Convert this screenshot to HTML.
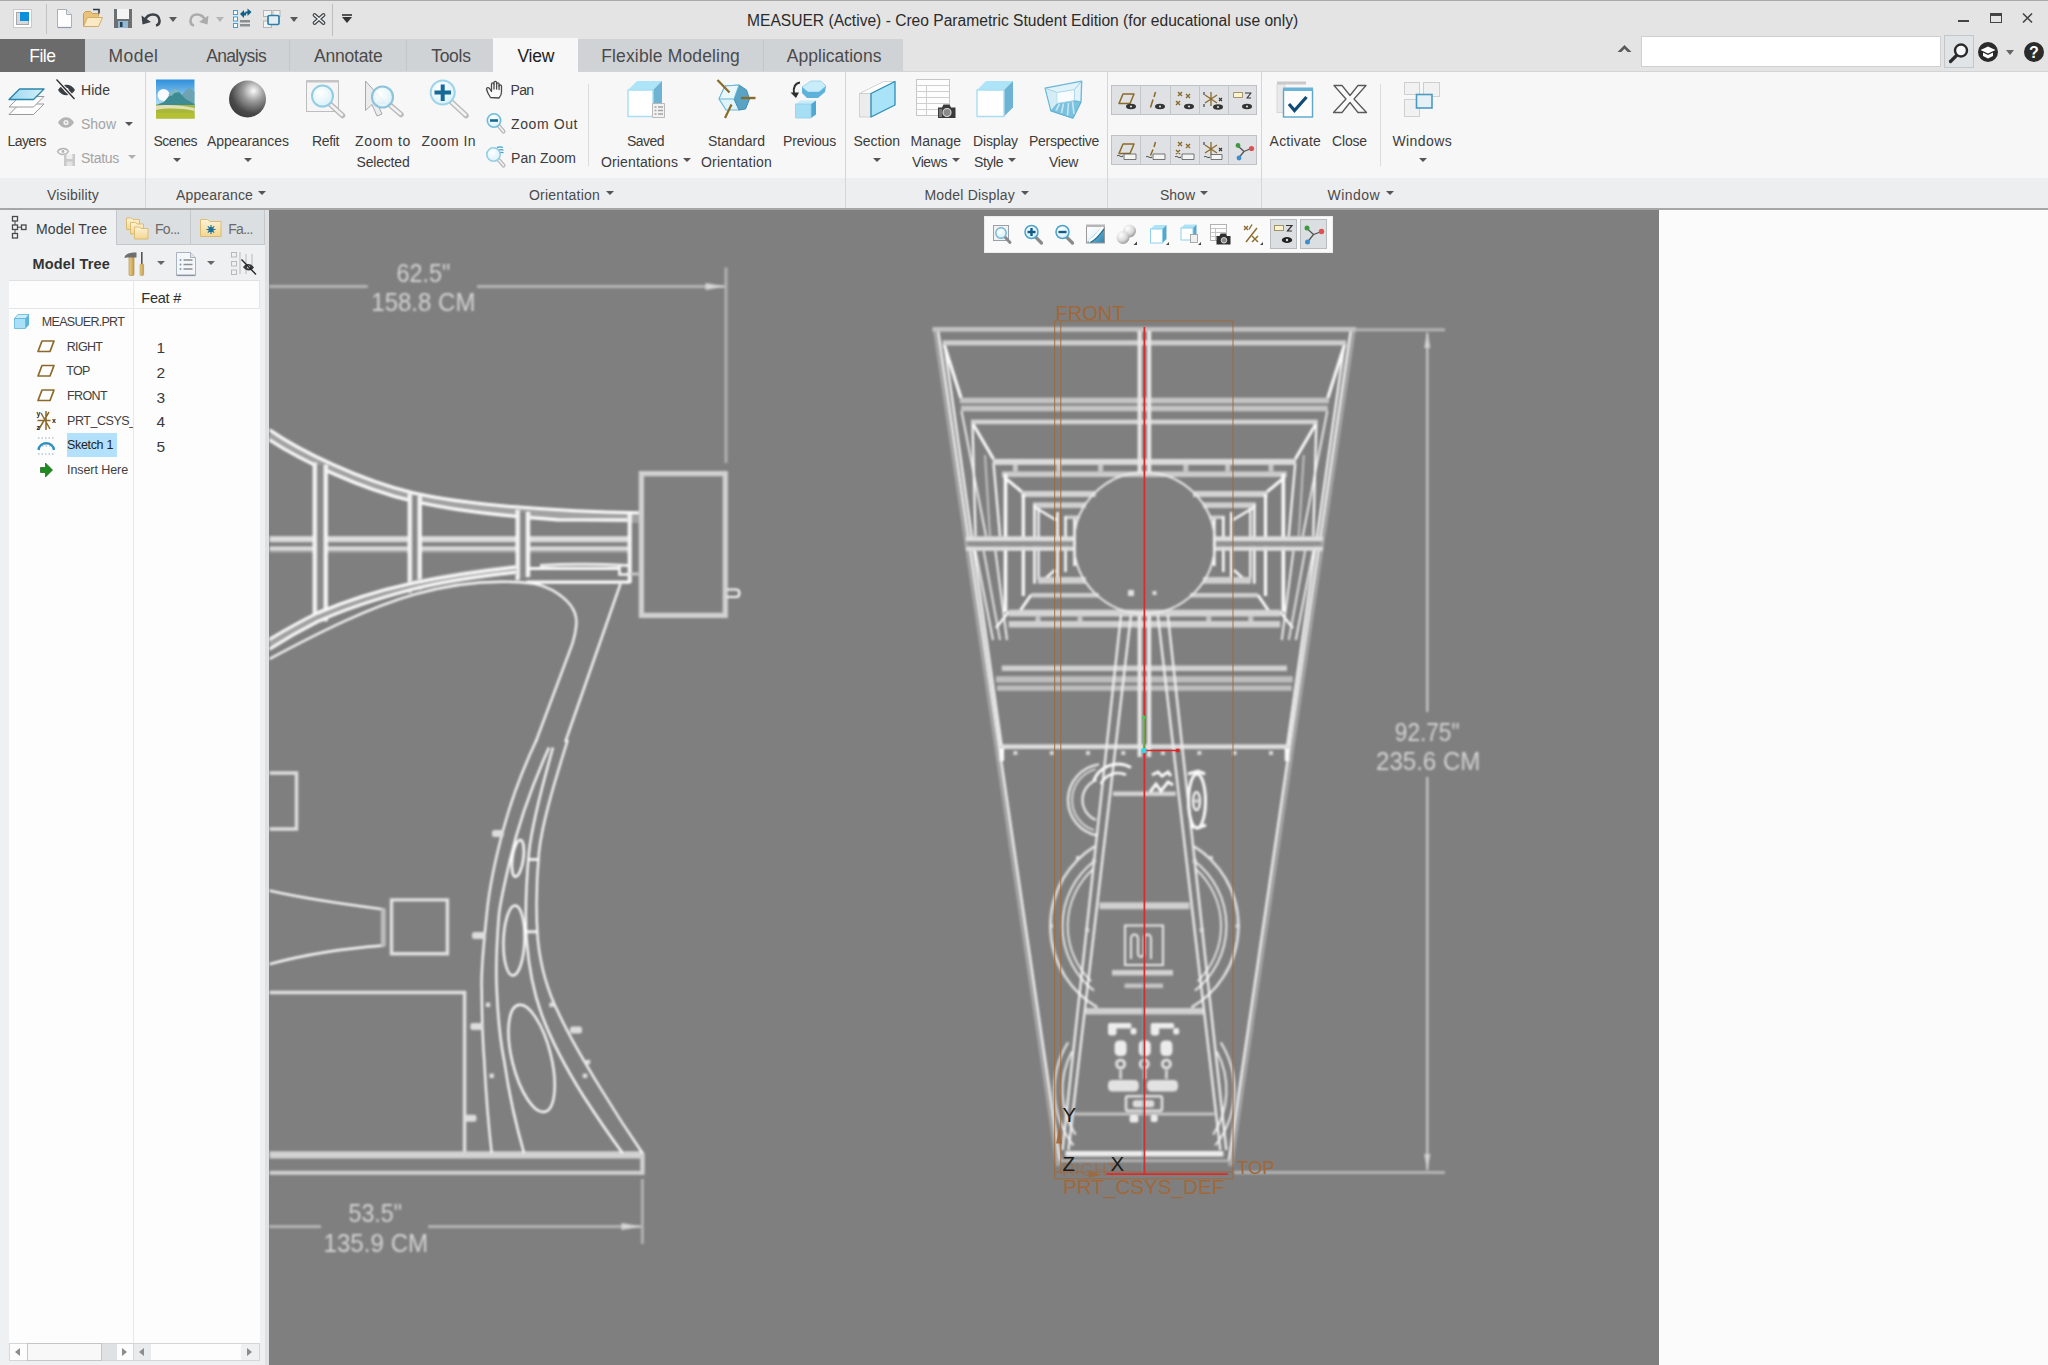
<!DOCTYPE html>
<html lang="en">
<head>
<meta charset="utf-8">
<title>MEASUER (Active) - Creo Parametric Student Edition</title>
<style>
*{box-sizing:border-box;margin:0;padding:0}
html,body{width:2048px;height:1365px;overflow:hidden;background:#fbfbfb;font-family:"Liberation Sans",sans-serif;color:#3c3c3c}
.abs,.abs>*{position:absolute}
#app{position:relative;width:2048px;height:1365px;overflow:hidden}
#titlebar{left:0;top:0;width:2048px;height:72px;background:#e4e4e4;border-top:1px solid #a9a9a9}
#tabbar{left:0;top:39px;width:903px;height:33px;background:#d0d3d6}
.tab{top:39px;height:33px;font-size:17.5px;line-height:33px;text-align:center;color:#4a4a4a;white-space:nowrap}
#ribbon{left:0;top:72px;width:2048px;height:106px;background:#f7f7f7}
#grouprow{left:0;top:178px;width:2048px;height:30px;background:#edeef0}
#ribline{left:0;top:208px;width:2048px;height:2px;background:#a6a6a6}
.gl{top:178px;height:30px;line-height:31px;font-size:14.5px;color:#4a4a4a;white-space:nowrap}
.gsep{top:72px;width:1px;height:136px;background:#d4d6d8}
.rl{font-size:14.5px;color:#3e3e3e;white-space:nowrap;text-align:center;line-height:20px}
.dim{color:#9a9a9a}
.tri{width:0;height:0;border-left:4px solid transparent;border-right:4px solid transparent;border-top:5px solid #555}
#leftpanel{left:0;top:210px;width:269px;height:1155px;background:#eef0f2}
#viewport{left:269px;top:210px;width:1390px;height:1155px;background:#7f7f7f;overflow:hidden}
#rightpanel{left:1659px;top:210px;width:389px;height:1155px;background:#fbfbfb}
svg{position:absolute;overflow:visible}
</style>
</head>
<body>
<div id="app" class="abs">
<div id="titlebar"></div>
<div id="tabbar"></div>
<div id="ribbon"></div>
<div id="grouprow"></div>
<div id="ribline"></div>
<div id="leftpanel"></div>
<div id="viewport"></div>
<div id="rightpanel"></div>
<!--TITLE-->
<!-- ===== TITLE BAR ===== -->
<div class="abs" id="qat">
 <!-- app icon -->
 <div style="left:13px;top:9px;width:19px;height:19px;background:#fff;border:1px solid #c9c9c9"></div>
 <div style="left:16px;top:12px;width:13px;height:13px;background:#d9d9d9;border:1px solid #a8a8a8"></div>
 <div style="left:20px;top:12px;width:9px;height:9px;background:#0a8fdc"></div>
 <div style="left:46px;top:4px;width:1px;height:30px;background:#c2c2c2"></div>
 <!-- new -->
 <svg style="left:56px;top:8px" width="18" height="21" viewBox="0 0 18 21"><path d="M1.5 1.5h9l5 5v13h-14z" fill="#fdfdfd" stroke="#a9b1ba" stroke-width="1"/><path d="M10.5 1.5v5h5" fill="#dfe8f0" stroke="#a9b1ba" stroke-width="1"/><path d="M2 19.5h13" stroke="#8f98a2" stroke-width="1.2"/></svg>
 <!-- open -->
 <svg style="left:82px;top:8px" width="22" height="21" viewBox="0 0 22 21"><path d="M1.5 18.5v-13l2-2h5l2 2h6v3" fill="#e8c27a" stroke="#c79f52"/><path d="M1.5 18.5l4-9h15l-4 9z" fill="#fbe9c3" stroke="#d3ad66"/><path d="M11 1.5h6v4" fill="none" stroke="#2d3a45" stroke-width="1.6"/></svg>
 <!-- save -->
 <svg style="left:113px;top:8px" width="20" height="21" viewBox="0 0 20 21"><rect x="1" y="1" width="18" height="19" fill="#6d7073"/><rect x="4" y="1" width="12" height="10" fill="#f4f4f4"/><rect x="5" y="13" width="10" height="7" fill="#8fb9d6"/><rect x="7" y="14" width="2.5" height="5" fill="#2f3b45"/></svg>
 <!-- undo -->
 <svg style="left:141px;top:11px" width="22" height="16" viewBox="0 0 22 16"><path d="M4 9 C7 1.5,18 1.5,18.5 9.5 C18.6 12,17 14,15 14.5" fill="none" stroke="#3b4248" stroke-width="2.6"/><path d="M0.5 4.5l1 9 8.5-2.5z" fill="#3b4248"/></svg>
 <div class="tri" style="left:169px;top:17px;border-top-color:#5a5a5a"></div>
 <!-- redo -->
 <svg style="left:187px;top:11px" width="22" height="16" viewBox="0 0 22 16"><path d="M18 9 C15 1.5,4 1.5,3.5 9.500 C3.400 12,5 14,7 14.5" fill="none" stroke="#ababab" stroke-width="2.6"/><path d="M21.5 4.5l-1 9-8.5-2.5z" fill="#ababab"/></svg>
 <div class="tri" style="left:216px;top:17px;border-top-color:#b5b5b5"></div>
 <!-- regenerate -->
 <svg style="left:233px;top:8px" width="20" height="20" viewBox="0 0 20 20"><rect x="0.500" y="2.500" width="4" height="4" fill="#fff" stroke="#3aa0d8"/><rect x="0.500" y="9" width="4" height="4" fill="#fff" stroke="#3aa0d8"/><rect x="0.500" y="15.500" width="4" height="4" fill="#fff" stroke="#3aa0d8"/><path d="M7 6l4-4v2.500h2v3h-2v2.500z" fill="#0e5f8a"/><path d="M18.500 4l-4 4v-2.500h-2v-2h2v-3z" fill="#0e5f8a"/><rect x="7" y="12" width="10" height="2.500" fill="#8b8f93"/><rect x="7" y="16" width="10" height="2.500" fill="#8b8f93"/></svg>
 <!-- windows -->
 <svg style="left:262px;top:9px" width="20" height="20" viewBox="0 0 20 20"><rect x="1.500" y="1.500" width="8" height="6" fill="#f2f2f2" stroke="#b4b4b4"/><rect x="11" y="1.500" width="7" height="6" fill="#f2f2f2" stroke="#b4b4b4"/><rect x="1.500" y="12" width="8" height="6.500" fill="#f2f2f2" stroke="#b4b4b4"/><rect x="6" y="6.500" width="11" height="9" rx="1.500" fill="#e4edf3" stroke="#2e7fa8" stroke-width="1.700"/></svg>
 <div class="tri" style="left:290px;top:17px;border-top-color:#5a5a5a"></div>
 <!-- close X -->
 <svg style="left:312px;top:13px" width="14" height="12" viewBox="0 0 14 12"><path d="M2.500 2l9 8M11.500 2l-9 8" stroke="#3f4449" stroke-width="3.800" stroke-linecap="round"/><path d="M2.500 2l9 8M11.500 2l-9 8" stroke="#f4f4f4" stroke-width="1.500" stroke-linecap="round"/></svg>
 <div style="left:332px;top:4px;width:1px;height:32px;background:#bdbdbd"></div>
 <div style="left:342px;top:14px;width:10px;height:1.500px;background:#555"></div>
 <div class="tri" style="left:342px;top:17px;border-left-width:5px;border-right-width:5px;border-top-width:6px;border-top-color:#333"></div>
</div>
<div class="abs"><div id="wtitle" style="left:747px;top:11px;font-size:15.600px;line-height:20px;color:#2b2b2b;white-space:nowrap">MEASUER (Active) - Creo Parametric Student Edition (for educational use only)</div></div>
<div class="abs" id="winctl">
 <div style="left:1958px;top:20px;width:11px;height:2px;background:#444"></div>
 <div style="left:1990px;top:13px;width:12px;height:10px;border:1.500px solid #444;border-top-width:3.500px"></div>
 <svg style="left:2022px;top:13px" width="11" height="10" viewBox="0 0 11 10"><path d="M1 0.500l9 9M10 0.500l-9 9" stroke="#444" stroke-width="1.600"/></svg>
 <svg style="left:1617px;top:44px" width="15" height="9" viewBox="0 0 15 9"><path d="M0.500 8l7-7 7 7h-3.800l-3.200-3.200-3.200 3.200z" fill="#5a5a5a"/></svg>
 <div style="left:1641px;top:36px;width:300px;height:31px;background:#fff;border:1px solid #cfcfcf"></div>
 <div style="left:1944px;top:35px;width:30px;height:33px;background:#e1e4e7;border:1px solid #c4c7ca"></div>
 <svg style="left:1948px;top:42px" width="22" height="22" viewBox="0 0 22 22"><circle cx="13" cy="8.500" r="6" fill="#f6f8fa" stroke="#2a2a2a" stroke-width="2.400"/><path d="M8.500 13.500l-6 6" stroke="#2a2a2a" stroke-width="3.200" stroke-linecap="round"/></svg>
 <svg style="left:1977px;top:41px" width="22" height="22" viewBox="0 0 22 22"><circle cx="11" cy="11" r="10" fill="#2b2b2b"/><path d="M3.500 9l7.500-3.500 7.500 3.500-7.500 3.500z" fill="#fff"/><path d="M6 11.500v3.500l5 2.500 5-2.500v-3.500l-5 2.500z" fill="#fff"/></svg>
 <div class="tri" style="left:2006px;top:50px;border-top-color:#666"></div>
 <svg style="left:2023px;top:41px" width="22" height="22" viewBox="0 0 22 22"><circle cx="11" cy="11" r="10" fill="#2b2b2b"/><text x="11" y="16.500" font-family="Liberation Sans, sans-serif" font-weight="bold" font-size="16" fill="#fff" text-anchor="middle">?</text></svg>
 <div style="left:0;top:71px;width:2048px;height:1px;background:#d2d4d6"></div>
</div>
<!-- ===== TABS ===== -->
<div class="abs" id="tabs">
<div style="left:0px;top:39px;width:85px;height:33px;background:#6b6b6b"></div>
<div class="rl" style="left:29.3px;top:45.5px;font-size:17.5px;letter-spacing:-0.50px;color:#fff;">File</div>
<div class="rl" style="left:108.5px;top:45.5px;font-size:17.5px;letter-spacing:0.45px;color:#4a4a4a;">Model</div>
<div class="rl" style="left:206.2px;top:45.5px;font-size:17.5px;letter-spacing:-0.67px;color:#4a4a4a;">Analysis</div>
<div class="rl" style="left:314.0px;top:45.5px;font-size:17.5px;letter-spacing:-0.19px;color:#4a4a4a;">Annotate</div>
<div class="rl" style="left:431.2px;top:45.5px;font-size:17.5px;letter-spacing:-0.29px;color:#4a4a4a;">Tools</div>
<div style="left:493px;top:38px;width:85px;height:34px;background:#f7f7f7"></div>
<div class="rl" style="left:517.4px;top:45.5px;font-size:17.5px;letter-spacing:-0.18px;color:#222;">View</div>
<div class="rl" style="left:601.2px;top:45.5px;font-size:17.5px;letter-spacing:0.15px;color:#4a4a4a;">Flexible Modeling</div>
<div class="rl" style="left:786.8px;top:45.5px;font-size:17.5px;letter-spacing:0.02px;color:#4a4a4a;">Applications</div>
<div style="left:289px;top:40px;width:1px;height:31px;background:#c3c6c9"></div>
<div style="left:406px;top:40px;width:1px;height:31px;background:#c3c6c9"></div>
<div style="left:763px;top:40px;width:1px;height:31px;background:#c3c6c9"></div>
</div>
<!--/TABS-->
<!--RIBBON-->
<!-- ===== RIBBON LABELS ===== -->
<div class="abs" id="riblabels">
<div class="rl" style="left:7.5px;top:131.0px;font-size:14px;letter-spacing:-0.59px;color:#3c3c3c;">Layers</div>
<div class="rl" style="left:81.0px;top:80.0px;font-size:14px;letter-spacing:0.05px;color:#3c3c3c;">Hide</div>
<div class="rl" style="left:153.5px;top:131.0px;font-size:14px;letter-spacing:-0.53px;color:#3c3c3c;">Scenes</div>
<div class="rl" style="left:207.0px;top:131.0px;font-size:14px;letter-spacing:-0.05px;color:#3c3c3c;">Appearances</div>
<div class="rl" style="left:312.0px;top:131.0px;font-size:14px;letter-spacing:-0.36px;color:#3c3c3c;">Refit</div>
<div class="rl" style="left:355.0px;top:131.0px;font-size:14px;letter-spacing:0.66px;color:#3c3c3c;">Zoom to</div>
<div class="rl" style="left:356.5px;top:152.0px;font-size:14px;letter-spacing:-0.18px;color:#3c3c3c;">Selected</div>
<div class="rl" style="left:421.5px;top:131.0px;font-size:14px;letter-spacing:0.45px;color:#3c3c3c;">Zoom In</div>
<div class="rl" style="left:510.6px;top:80.0px;font-size:14px;letter-spacing:-0.70px;color:#3c3c3c;">Pan</div>
<div class="rl" style="left:511.0px;top:114.0px;font-size:14px;letter-spacing:0.60px;color:#3c3c3c;">Zoom Out</div>
<div class="rl" style="left:511.0px;top:148.0px;font-size:14px;letter-spacing:0.05px;color:#3c3c3c;">Pan Zoom</div>
<div class="rl" style="left:627.0px;top:131.0px;font-size:14px;letter-spacing:-0.54px;color:#3c3c3c;">Saved</div>
<div class="rl" style="left:601.0px;top:152.0px;font-size:14px;letter-spacing:0.13px;color:#3c3c3c;">Orientations</div>
<div class="rl" style="left:708.0px;top:131.0px;font-size:14px;letter-spacing:0.02px;color:#3c3c3c;">Standard</div>
<div class="rl" style="left:701.0px;top:152.0px;font-size:14px;letter-spacing:0.23px;color:#3c3c3c;">Orientation</div>
<div class="rl" style="left:783.0px;top:131.0px;font-size:14px;letter-spacing:-0.18px;color:#3c3c3c;">Previous</div>
<div class="rl" style="left:853.5px;top:131.0px;font-size:14px;letter-spacing:-0.03px;color:#3c3c3c;">Section</div>
<div class="rl" style="left:910.5px;top:131.0px;font-size:14px;letter-spacing:-0.01px;color:#3c3c3c;">Manage</div>
<div class="rl" style="left:912.0px;top:152.0px;font-size:14px;letter-spacing:-0.42px;color:#3c3c3c;">Views</div>
<div class="rl" style="left:973.0px;top:131.0px;font-size:14px;letter-spacing:-0.13px;color:#3c3c3c;">Display</div>
<div class="rl" style="left:974.0px;top:152.0px;font-size:14px;letter-spacing:-0.42px;color:#3c3c3c;">Style</div>
<div class="rl" style="left:1029.0px;top:131.0px;font-size:14px;letter-spacing:-0.29px;color:#3c3c3c;">Perspective</div>
<div class="rl" style="left:1049.0px;top:152.0px;font-size:14px;letter-spacing:-0.27px;color:#3c3c3c;">View</div>
<div class="rl" style="left:1269.6px;top:131.0px;font-size:14px;letter-spacing:0.20px;color:#3c3c3c;">Activate</div>
<div class="rl" style="left:1332.0px;top:131.0px;font-size:14px;letter-spacing:-0.16px;color:#3c3c3c;">Close</div>
<div class="rl" style="left:1392.5px;top:131.0px;font-size:14px;letter-spacing:0.39px;color:#3c3c3c;">Windows</div>
<div class="rl" style="left:81.0px;top:114.0px;font-size:14px;letter-spacing:-0.00px;color:#a3a3a3;">Show</div>
<div class="rl" style="left:81.0px;top:148.0px;font-size:14px;letter-spacing:-0.28px;color:#a3a3a3;">Status</div>
<div class="rl" style="left:47.0px;top:184.7px;font-size:14px;letter-spacing:0.17px;color:#4a4a4a;">Visibility</div>
<div class="rl" style="left:176.0px;top:184.7px;font-size:14px;letter-spacing:0.15px;color:#4a4a4a;">Appearance</div>
<div class="rl" style="left:529.0px;top:184.7px;font-size:14px;letter-spacing:0.23px;color:#4a4a4a;">Orientation</div>
<div class="rl" style="left:924.5px;top:184.7px;font-size:14px;letter-spacing:0.20px;color:#4a4a4a;">Model Display</div>
<div class="rl" style="left:1160.0px;top:184.7px;font-size:14px;letter-spacing:-0.00px;color:#4a4a4a;">Show</div>
<div class="rl" style="left:1327.6px;top:184.7px;font-size:14px;letter-spacing:0.43px;color:#4a4a4a;">Window</div>
<div class="tri" style="left:125px;top:122px;border-left-width:4.0px;border-right-width:4.0px;border-top-width:4.5px;border-top-color:#555"></div>
<div class="tri" style="left:128px;top:155px;border-left-width:4.0px;border-right-width:4.0px;border-top-width:4.5px;border-top-color:#b0b0b0"></div>
<div class="tri" style="left:173px;top:158px;border-left-width:4.0px;border-right-width:4.0px;border-top-width:4.5px;border-top-color:#555"></div>
<div class="tri" style="left:244px;top:158px;border-left-width:4.0px;border-right-width:4.0px;border-top-width:4.5px;border-top-color:#555"></div>
<div class="tri" style="left:683px;top:158px;border-left-width:4.0px;border-right-width:4.0px;border-top-width:4.5px;border-top-color:#555"></div>
<div class="tri" style="left:873px;top:158px;border-left-width:4.0px;border-right-width:4.0px;border-top-width:4.5px;border-top-color:#555"></div>
<div class="tri" style="left:952px;top:158px;border-left-width:4.0px;border-right-width:4.0px;border-top-width:4.5px;border-top-color:#555"></div>
<div class="tri" style="left:1008px;top:158px;border-left-width:4.0px;border-right-width:4.0px;border-top-width:4.5px;border-top-color:#555"></div>
<div class="tri" style="left:1419px;top:158px;border-left-width:4.0px;border-right-width:4.0px;border-top-width:4.5px;border-top-color:#555"></div>
<div class="tri" style="left:258px;top:191px;border-left-width:4.0px;border-right-width:4.0px;border-top-width:4.5px;border-top-color:#555"></div>
<div class="tri" style="left:606px;top:191px;border-left-width:4.0px;border-right-width:4.0px;border-top-width:4.5px;border-top-color:#555"></div>
<div class="tri" style="left:1021px;top:191px;border-left-width:4.0px;border-right-width:4.0px;border-top-width:4.5px;border-top-color:#555"></div>
<div class="tri" style="left:1200px;top:191px;border-left-width:4.0px;border-right-width:4.0px;border-top-width:4.5px;border-top-color:#555"></div>
<div class="tri" style="left:1386px;top:191px;border-left-width:4.0px;border-right-width:4.0px;border-top-width:4.5px;border-top-color:#555"></div>
<div class="gsep" style="left:145px"></div>
<div class="gsep" style="left:845px"></div>
<div class="gsep" style="left:1107px"></div>
<div class="gsep" style="left:1261px"></div>
<div style="left:588px;top:84px;width:1px;height:82px;background:#dcdcdc"></div>
<div style="left:1380px;top:84px;width:1px;height:82px;background:#dcdcdc"></div>
<div style="left:1111px;top:85px;width:146px;height:30px;background:#dfe1e4;border:1px solid #bfc2c5"></div>
<div style="left:1140px;top:85px;width:1px;height:30px;background:#c3c6c9"></div>
<div style="left:1170px;top:85px;width:1px;height:30px;background:#c3c6c9"></div>
<div style="left:1199px;top:85px;width:1px;height:30px;background:#c3c6c9"></div>
<div style="left:1228px;top:85px;width:1px;height:30px;background:#c3c6c9"></div>
<div style="left:1111px;top:135px;width:146px;height:30px;background:#dfe1e4;border:1px solid #bfc2c5"></div>
<div style="left:1140px;top:135px;width:1px;height:30px;background:#c3c6c9"></div>
<div style="left:1170px;top:135px;width:1px;height:30px;background:#c3c6c9"></div>
<div style="left:1199px;top:135px;width:1px;height:30px;background:#c3c6c9"></div>
<div style="left:1228px;top:135px;width:1px;height:30px;background:#c3c6c9"></div>
</div>
<!-- ===== RIBBON ICONS ===== -->
<svg id="ribicons" style="left:0;top:0" width="2048" height="210" viewBox="0 0 2048 210">
<defs>
 <linearGradient id="gSky" x1="0" y1="0" x2="0" y2="1"><stop offset="0" stop-color="#2e8fdc"/><stop offset="0.55" stop-color="#9fd3f0"/><stop offset="1" stop-color="#d9eef8"/></linearGradient>
 <radialGradient id="gBall" cx="0.66" cy="0.28" r="0.8"><stop offset="0" stop-color="#fbfbfb"/><stop offset="0.35" stop-color="#9c9c9c"/><stop offset="0.75" stop-color="#4a4a4a"/><stop offset="1" stop-color="#3a3a3a"/></radialGradient>
 <radialGradient id="gLens" cx="0.4" cy="0.35" r="0.8"><stop offset="0" stop-color="#ffffff"/><stop offset="1" stop-color="#d3eef9"/></radialGradient>
 <linearGradient id="gLayer" x1="0" y1="0" x2="1" y2="0"><stop offset="0" stop-color="#9bd8ef"/><stop offset="1" stop-color="#d6f0fa"/></linearGradient>
 <linearGradient id="gPersp" x1="0" y1="0" x2="0" y2="1"><stop offset="0" stop-color="#e9f6fb"/><stop offset="1" stop-color="#7cc3df"/></linearGradient>
</defs>
<!-- Layers -->
<g stroke-linejoin="round">
 <path d="M9 114.500l10.500-10.500h24.500l-10.500 10.500z" fill="#fdfdfd" stroke="#9a9a9a"/>
 <path d="M9 107l10.500-10.500h24.500l-10.500 10.500z" fill="#fdfdfd" stroke="#9a9a9a"/>
 <path d="M9 99.500l10.500-10.500h24.500l-10.500 10.500z" fill="url(#gLayer)" stroke="#2a85aa" stroke-width="1.300"/>
</g>
<!-- Hide -->
<g>
 <path d="M58 90c4-7 13-7 17 0c-4 7-13 7-17 0z" fill="#3a3f44"/>
 <circle cx="66.500" cy="90" r="2.200" fill="#f7f7f7"/>
 <path d="M56.500 79.500l18 19.500" stroke="#f7f7f7" stroke-width="3.500"/>
 <path d="M56.500 79.500l18 19.500" stroke="#2b2b2b" stroke-width="1.300"/>
</g>
<!-- Show (disabled) -->
<g><path d="M58 122.500c4-7 12-7 16 0c-4 7-12 7-16 0z" fill="#b4b4b4"/><circle cx="66" cy="122.500" r="2.600" fill="#f1f1f1"/><circle cx="66" cy="122.500" r="1" fill="#b4b4b4"/></g>
<!-- Status (disabled) -->
<g><path d="M57.500 151.500c2.500-4 9-4 11 0c-2.500 4-9 4-11 0z" fill="none" stroke="#b4b4b4" stroke-width="1.300"/><circle cx="63" cy="151.500" r="1.400" fill="#b4b4b4"/>
 <rect x="64" y="154" width="11" height="12" fill="#c9c9c9"/><rect x="66.500" y="154" width="6" height="5" fill="#efefef"/><rect x="66.500" y="161.500" width="6" height="4.500" fill="#e3e3e3"/></g>
<!-- Scenes -->
<g>
 <rect x="156" y="79.500" width="38.500" height="39" fill="url(#gSky)"/>
 <circle cx="163.500" cy="95" r="6" fill="#ffffff" opacity="0.950"/>
 <path d="M174 103l15-16 5.500 5v13z" fill="#6ea3b3"/>
 <path d="M156 105l8-3 11.500-14 10 11 9 5v4h-38.500z" fill="#3d8c93"/>
 <path d="M168 95l7.500-7 4 4-5 1-3 3z" fill="#7fb7bf"/>
 <rect x="156" y="105" width="38.500" height="13.500" fill="#a8b838"/>
 <path d="M156 106c10-2 24-1 38.500 2v3c-14-3-28-3-38.500-1z" fill="#e3dfb6"/>
 <rect x="156" y="113" width="38.500" height="5.500" fill="#b5bf33"/>
</g>
<!-- Appearances ball -->
<circle cx="247.500" cy="99" r="18.500" fill="url(#gBall)"/>
<!-- Refit -->
<g>
 <rect x="306.500" y="81.500" width="32" height="30" fill="#f5f5f5" stroke="#bdbdbd"/>
 <rect x="306" y="80" width="33" height="2.500" fill="#c4c4c4"/>
 <path d="M330 104l12.500 11.500" stroke="#b9b9b9" stroke-width="5.500" stroke-linecap="round"/>
 <path d="M331 105l11 10" stroke="#f3f3f3" stroke-width="2.500" stroke-linecap="round"/>
 <circle cx="322.500" cy="96" r="10.500" fill="url(#gLens)" stroke="#93cde3" stroke-width="2"/>
</g>
<!-- Zoom to Selected -->
<g>
 <path d="M365.500 81v29.500l6.500-6 5 11.500 5-2-5-11h8z" fill="#ececec" stroke="#a9a9a9" stroke-linejoin="round"/>
 <path d="M390 105l11 9.500" stroke="#b9b9b9" stroke-width="5.500" stroke-linecap="round"/>
 <path d="M391 106l9.500 8" stroke="#f3f3f3" stroke-width="2.500" stroke-linecap="round"/>
 <circle cx="382.500" cy="97" r="10.500" fill="url(#gLens)" fill-opacity="0.850" stroke="#8cc4dc" stroke-width="2.200"/>
</g>
<!-- Zoom In -->
<g>
 <path d="M451 101.500l15 14" stroke="#bcbcbc" stroke-width="5.500" stroke-linecap="round"/>
 <path d="M452 102.500l13.500 12.500" stroke="#f3f3f3" stroke-width="2.500" stroke-linecap="round"/>
 <circle cx="442.700" cy="92.500" r="12" fill="url(#gLens)" stroke="#9bd3e8" stroke-width="2"/>
 <path d="M434.500 92.500h16.500M442.700 84.500v16.500" stroke="#156a98" stroke-width="4"/>
</g>
<!-- Pan hand -->
<g fill="#fafafa" stroke="#4a4a4a" stroke-width="1.300" stroke-linejoin="round" stroke-linecap="round">
 <path d="M490.500 97.500c-2-3-3.500-6-4-8.500c0-1.500 2-2 3-0.500l2 3v-7.500c0-1.600 2.400-1.600 2.500 0v-1.500c0-1.600 2.500-1.600 2.600 0v1.500c0-1.500 2.400-1.500 2.500 0v2c0-1.400 2.300-1.400 2.400 0v6c0 2.500-1 4.500-2.500 6z"/>
 <path d="M494 84v5M496.600 84v5M499.100 85.500v4" fill="none"/>
</g>
<!-- Zoom Out -->
<g>
 <path d="M498.500 125.500l5 6" stroke="#b5b5b5" stroke-width="4.200" stroke-linecap="round"/>
 <path d="M499 126l4.500 5.500" stroke="#f1f1f1" stroke-width="1.800" stroke-linecap="round"/>
 <circle cx="494" cy="120.500" r="6.700" fill="url(#gLens)" stroke="#6dbbd9" stroke-width="1.600"/>
 <path d="M490 120.500h8" stroke="#156a98" stroke-width="2.600"/>
</g>
<!-- Pan Zoom -->
<g>
 <path d="M498 159l5.500 6.500" stroke="#b5b5b5" stroke-width="4.200" stroke-linecap="round"/>
 <path d="M498.500 159.500l5 6" stroke="#f1f1f1" stroke-width="1.800" stroke-linecap="round"/>
 <circle cx="493.500" cy="154.500" r="6.700" fill="url(#gLens)" stroke="#93cde3" stroke-width="1.600"/>
 <path d="M497 147.500c2-0.800 4-0.800 6 0M499 150c1.500-0.500 3-0.500 4.500 0.300M500.500 152.500c1-0.300 2-0.200 3 0.300" stroke="#3aa0d0" stroke-width="1.200" fill="none"/>
</g>
<!-- Saved Orientations -->
<g stroke-linejoin="round">
 <path d="M628 90l9-9h25l-9 9z" fill="#aee4f7"/>
 <path d="M653 90l9-9v26.500l-9 9z" fill="#6fb3d2"/>
 <rect x="628" y="90" width="25" height="26.500" fill="#ffffff" stroke="#a8def3" stroke-width="1.400"/>
 <rect x="652.500" y="103.500" width="12" height="14" fill="#f2f2f2" stroke="#b9b9b9"/>
 <path d="M654.500 107h2M658 107h5M654.500 110.500h2M658 110.500h5M654.500 114h2M658 114h5" stroke="#a5a5a5" stroke-width="1.400"/>
</g>
<!-- Standard Orientation -->
<g stroke-linejoin="round">
 <path d="M719 99l6-13 14-1 7 12-7 13-13 0z" fill="#dff3fb" stroke="#69b7d6" stroke-width="1.200"/>
 <path d="M734 99l5-14 7.500 5 3 9-4 10-6.500 1z" fill="#5aa3c5" stroke="#3d8db3" stroke-width="1"/>
 <path d="M719 99l6-13 14-1-5 14z" fill="#eaf7fc" stroke="#69b7d6" stroke-width="1"/>
 <path d="M717.500 80l12 12.500" stroke="#8a6a2a" stroke-width="2.200"/>
 <path d="M741 98h14.500" stroke="#8a6a2a" stroke-width="2.400"/>
 <path d="M731.500 104.500l-6.500 13.500" stroke="#8a6a2a" stroke-width="2.200"/>
</g>
<!-- Previous -->
<g stroke-linejoin="round">
 <path d="M802 87l9-6h10l5 5-7 6h-11z" fill="#c8ecf9" stroke="#8fd0ea" stroke-width="0.800"/>
 <path d="M802 87l6 5h11l7-6-1 6-7 6h-11l-5-5z" fill="#5cb2db"/>
 <path d="M795.500 104l5-3.500h15.500l-5 3.500z" fill="#c8ecf9"/>
 <path d="M811 104l5-3.500v14l-5 3.500z" fill="#4fa8d2"/>
 <rect x="795.500" y="104" width="15.500" height="14" fill="#a6def4" stroke="#8fd0ea" stroke-width="0.800"/>
 <path d="M800 82.500c-5 0.500-7 5-6 11" fill="none" stroke="#2f2f2f" stroke-width="2"/>
 <path d="M790.500 92.500h8.500l-3 5.500z" fill="#2f2f2f"/>
</g>
<!-- Section -->
<g stroke-linejoin="round">
 <path d="M859.500 93.500l24-12h11.500l-24 12z" fill="#fdfdfd" stroke="#c9c9c9" stroke-width="0.800"/>
 <rect x="859.500" y="93.500" width="11.500" height="23.500" fill="#ececec" stroke="#c9c9c9" stroke-width="0.800"/>
 <path d="M871 93.500l24-12v23.500l-24 12z" fill="#a9e3f7" stroke="#2b8db5" stroke-width="1.300"/>
</g>
<!-- Manage Views -->
<g>
 <rect x="916.500" y="79.500" width="33" height="36" fill="#fdfdfd" stroke="#c6c6c6"/>
 <path d="M916.500 85.500h33M916.500 91.500h33M916.500 97.500h33M916.500 103.500h33M916.500 109.500h33M926.500 85.500v30" stroke="#cfcfcf" stroke-width="1"/>
 <path d="M938 107.500h4l1.500-3h6l1.500 3h4.500v10.500h-17.500z" fill="#3a3a3a"/>
 <circle cx="947" cy="112.500" r="4" fill="#8a8a8a" stroke="#d8d8d8" stroke-width="1.200"/>
 <rect x="939" y="109" width="3" height="8" fill="#777"/>
</g>
<!-- Display Style -->
<g stroke-linejoin="round">
 <path d="M977 90l9-9h27l-9 9z" fill="#aee4f7"/>
 <path d="M1004 90l9-9v26.500l-9 9z" fill="#6fb3d2"/>
 <rect x="977" y="90" width="27" height="26.500" fill="#ffffff" stroke="#a8def3" stroke-width="1.400"/>
</g>
<!-- Perspective View -->
<g stroke-linejoin="round">
 <path d="M1045.100 88.100L1081.700 81.100L1081 102L1072.900 118.100L1050.900 110.800z" fill="#e1f2f9" stroke="#69b7d9" stroke-width="1.300"/>
 <path d="M1050.900 110.800L1056.800 103.500L1074.400 100.600L1081 102L1072.900 118.100z" fill="#7cc2df" stroke="#5aaed2" stroke-width="0.800"/>
 <path d="M1056 110.500l3.500-6.500M1061.500 113l2-9.500M1067.500 115.500l1-12.500M1074 114l-1.500-12.500" stroke="#c7e6f3" stroke-width="1.600"/>
 <path d="M1056.800 92.500L1074.400 89.600V100.600L1056.800 103.500z" fill="#f8fcfe" stroke="#9fd2e7" stroke-width="0.900"/>
 <path d="M1045.100 88.100L1056.800 92.500M1081.700 81.100L1074.400 89.600" stroke="#8ccbe4" stroke-width="0.900" fill="none"/>
 <path d="M1046 89l5.500 21 5.300-6.500v-11z" fill="#cfe9f4" opacity="0.700"/>
</g>
<!-- Show buttons (top row: with eye) -->
<g fill="none" stroke-linejoin="round">
 <path d="M1119 103.500l4-9.500h11l-4 9.500z" stroke="#8a6a2a" stroke-width="1.500"/>
 <ellipse cx="1131" cy="106.500" rx="5" ry="2.800" fill="#333" stroke="none"/><circle cx="1131" cy="106.500" r="1.100" fill="#dcdfe2" stroke="none"/>
 <path d="M1155.500 92l-1.500 5M1153 99.500l-2.500 8" stroke="#8a6a2a" stroke-width="1.500"/>
 <ellipse cx="1160" cy="106.500" rx="5" ry="2.800" fill="#333" stroke="none"/><circle cx="1160" cy="106.500" r="1.100" fill="#dcdfe2" stroke="none"/>
 <path d="M1178 92l4 4M1182 92l-4 4M1186 94l4 4M1190 94l-4 4M1176 101l4 4M1180 101l-4 4" stroke="#8a6a2a" stroke-width="1.400"/>
 <ellipse cx="1189" cy="106.500" rx="5" ry="2.800" fill="#333" stroke="none"/><circle cx="1189" cy="106.500" r="1.100" fill="#dcdfe2" stroke="none"/>
 <path d="M1211 92v14M1205 95l12 8M1217 95l-12 8" stroke="#8a6a2a" stroke-width="1.300"/>
 <path d="M1204 92v3M1204 104v3M1219 98l3 3M1222 98l-3 3" stroke="#333" stroke-width="1.100"/>
 <ellipse cx="1218" cy="107" rx="5" ry="2.800" fill="#333" stroke="none"/><circle cx="1218" cy="107" r="1.100" fill="#dcdfe2" stroke="none"/>
 <rect x="1233.500" y="92.500" width="9" height="5" fill="#fbf3cf" stroke="#9a8a5a" stroke-width="0.900"/>
 <path d="M1245 93h6l-4 5h4" stroke="#333" stroke-width="1.200"/>
 <ellipse cx="1247" cy="106.500" rx="5" ry="2.800" fill="#333" stroke="none"/><circle cx="1247" cy="106.500" r="1.100" fill="#dcdfe2" stroke="none"/>
</g>
<!-- Show buttons (bottom row: with tag) -->
<g fill="none" stroke-linejoin="round">
 <path d="M1119 153.500l4-9.500h11l-4 9.500z" stroke="#8a6a2a" stroke-width="1.500"/>
 <rect x="1124" y="154" width="12" height="5.500" fill="#f4f4f4" stroke="#555" stroke-width="0.800"/><path d="M1117 156c2-2 3.500 2 6 0" stroke="#333" stroke-width="1"/>
 <path d="M1155.500 142l-1.500 5M1153 149.500l-2.500 6" stroke="#8a6a2a" stroke-width="1.500"/>
 <rect x="1153" y="154" width="12" height="5.500" fill="#f4f4f4" stroke="#555" stroke-width="0.800"/><path d="M1146 157c2-2 3.500 2 6 0" stroke="#333" stroke-width="1"/>
 <path d="M1178 142l4 4M1182 142l-4 4M1186 144l4 4M1190 144l-4 4M1176 150l4 4M1180 150l-4 4" stroke="#8a6a2a" stroke-width="1.400"/>
 <rect x="1182" y="154" width="12" height="5.500" fill="#f4f4f4" stroke="#555" stroke-width="0.800"/><path d="M1175 157c2-2 3.500 2 6 0" stroke="#333" stroke-width="1"/>
 <path d="M1211 142v13M1205 145l12 8M1217 145l-12 8" stroke="#8a6a2a" stroke-width="1.300"/>
 <path d="M1204 142v3M1219 148l3 3M1222 148l-3 3" stroke="#333" stroke-width="1.100"/>
 <rect x="1211" y="154.500" width="11" height="5" fill="#f4f4f4" stroke="#555" stroke-width="0.800"/><path d="M1204 157c2-2 3.500 2 6 0" stroke="#333" stroke-width="1"/>
 <path d="M1238 146l6 5.500 7-3M1244 151.500l-5 6" stroke="#555" stroke-width="1.300"/>
 <circle cx="1238" cy="145.500" r="2.400" fill="#3e9a3e" stroke="none"/><circle cx="1251.500" cy="148.500" r="2.600" fill="#e05050" stroke="none"/><circle cx="1239" cy="158" r="2.400" fill="#3a8fd0" stroke="none"/>
</g>
<!-- Activate -->
<g>
 <rect x="1277" y="81.500" width="29" height="3" fill="#c9c9c9"/>
 <rect x="1277" y="84.500" width="8" height="28" fill="#e9e9e9" stroke="#d2d2d2" stroke-width="0.800"/>
 <rect x="1283.500" y="89.500" width="29" height="27.500" fill="#fdfdfd" stroke="#5aa6cc" stroke-width="1.400"/>
 <rect x="1283" y="87.500" width="30" height="3.500" fill="#6ab2d6"/>
 <path d="M1289 104l5.500 6.500 12-13.500" fill="none" stroke="#0f4c75" stroke-width="3.200"/>
</g>
<!-- Close X -->
<g>
 <path d="M1334 85.500h8l8 10 8-10h8l-12 13.500 12.500 13.500h-8.500l-8-10-8 10h-8.500l12.500-13.500z" fill="#fbfbfb" stroke="#5a5a5a" stroke-width="1.300" stroke-linejoin="round"/>
</g>
<!-- Windows -->
<g>
 <rect x="1404.500" y="82.500" width="15" height="12" fill="#f1f1f1" stroke="#cfcfcf"/>
 <rect x="1423.500" y="82.500" width="16" height="14" fill="#f1f1f1" stroke="#cfcfcf"/>
 <rect x="1404.500" y="99.500" width="15" height="17" fill="#f1f1f1" stroke="#cfcfcf"/>
 <rect x="1416.500" y="94.500" width="15.500" height="13.500" fill="#e6f1f7" stroke="#4a9ac2" stroke-width="1.600"/>
</g>

</svg>
<!--/RIBBON-->
<!--LEFT-->
<!-- ===== LEFT PANEL ===== -->
<div class="abs" id="leftp">
<div style="left:265px;top:210px;width:4px;height:1155px;background:#dfe1e3"></div>
<div style="left:116px;top:210px;width:149px;height:35px;background:#dcdfe1;border:1px solid #c5c8cb;border-top:none"></div>
<div style="left:190px;top:210px;width:1px;height:35px;background:#c5c8cb"></div>
<div class="rl" style="left:36.0px;top:218.6px;font-size:14px;letter-spacing:0.10px;color:#3c3c3c;">Model Tree</div>
<div class="rl" style="left:155.0px;top:218.6px;font-size:14px;letter-spacing:-0.70px;color:#6a6a6a;">Fo...</div>
<div class="rl" style="left:228.2px;top:218.6px;font-size:14px;letter-spacing:-0.70px;color:#6a6a6a;">Fa...</div>
<div class="rl" style="left:32.5px;top:253.7px;font-size:14.5px;letter-spacing:0.18px;color:#333;font-weight:bold;">Model Tree</div>
<div class="tri" style="left:157px;top:261px;border-left-width:4.0px;border-right-width:4.0px;border-top-width:4.5px;border-top-color:#666"></div>
<div class="tri" style="left:207px;top:261px;border-left-width:4.0px;border-right-width:4.0px;border-top-width:4.5px;border-top-color:#666"></div>
<div style="left:9px;top:281px;width:251px;height:1062px;background:#fdfdfd"></div>
<div style="left:9px;top:280px;width:251px;height:1px;background:#dfe1e3"></div>
<div style="left:9px;top:308px;width:251px;height:1px;background:#e3e5e7"></div>
<div style="left:133px;top:281px;width:1px;height:1062px;background:#e6e8ea"></div>
<div style="left:259px;top:281px;width:1px;height:28px;background:#e3e5e7"></div>
<div class="rl" style="left:141.3px;top:287.5px;font-size:14.5px;letter-spacing:-0.23px;color:#2f2f2f;">Feat #</div>
<div style="left:66.5px;top:433px;width:50px;height:23.500px;background:#b3e0fa"></div>
<div class="rl" style="left:41.8px;top:312.0px;font-size:12.5px;letter-spacing:-0.70px;color:#3f3f3f;">MEASUER.PRT</div>
<div class="rl" style="left:66.8px;top:337.0px;font-size:12.5px;letter-spacing:-0.70px;color:#3f3f3f;">RIGHT</div>
<div class="rl" style="left:66.3px;top:361.0px;font-size:12.5px;letter-spacing:-0.70px;color:#3f3f3f;">TOP</div>
<div class="rl" style="left:67.0px;top:386.0px;font-size:12.5px;letter-spacing:-0.61px;color:#3f3f3f;">FRONT</div>
<div class="rl" style="left:67.0px;top:435.0px;font-size:12.5px;letter-spacing:-0.33px;color:#222;">Sketch 1</div>
<div class="rl" style="left:67.0px;top:460.0px;font-size:12.5px;letter-spacing:-0.07px;color:#3f3f3f;">Insert Here</div>
<div style="left:67px;top:410.700px;width:66px;height:20px;overflow:hidden"><div class="rl" style="position:absolute;left:0;top:0;font-size:12.5px;letter-spacing:-0.450px;color:#3f3f3f">PRT_CSYS_DEF</div></div>
<div class="rl" style="left:156.500px;top:338px;font-size:15.5px;color:#3a3a3a">1</div>
<div class="rl" style="left:156.500px;top:363px;font-size:15.5px;color:#3a3a3a">2</div>
<div class="rl" style="left:156.500px;top:387.6px;font-size:15.5px;color:#3a3a3a">3</div>
<div class="rl" style="left:156.500px;top:412px;font-size:15.5px;color:#3a3a3a">4</div>
<div class="rl" style="left:156.500px;top:437px;font-size:15.5px;color:#3a3a3a">5</div>
<div style="left:9px;top:1343px;width:251px;height:18px;background:#fdfdfd;border:1px solid #d4d6d8"></div>
<div style="left:26.500px;top:1343px;width:75px;height:18px;background:#f8f8f8;border:1px solid #c3c5c7"></div>
<div style="left:101.500px;top:1344px;width:15.500px;height:16px;background:#dfe1e3"></div>
<div style="left:133px;top:1344px;width:18px;height:16px;background:#e9ebed"></div>
<div style="left:241px;top:1344px;width:18px;height:16px;background:#eef0f2"></div>
<div style="left:133px;top:1343px;width:1px;height:18px;background:#d4d6d8"></div>
<div style="left:15px;top:1348px;width:0;height:0;border-top:4px solid transparent;border-bottom:4px solid transparent;border-right:5px solid #8c8c8c"></div>
<div style="left:122px;top:1348px;width:0;height:0;border-top:4px solid transparent;border-bottom:4px solid transparent;border-left:5px solid #8c8c8c"></div>
<div style="left:139px;top:1348px;width:0;height:0;border-top:4px solid transparent;border-bottom:4px solid transparent;border-right:5px solid #8c8c8c"></div>
<div style="left:247px;top:1348px;width:0;height:0;border-top:4px solid transparent;border-bottom:4px solid transparent;border-left:5px solid #8c8c8c"></div>
</div>
<svg id="lefticons" style="left:0;top:210px" width="269" height="290" viewBox="0 210 269 290">
<defs><linearGradient id="gFold" x1="0" y1="0" x2="0" y2="1"><stop offset="0" stop-color="#fdf3d6"/><stop offset="1" stop-color="#f3d58f"/></linearGradient>
<linearGradient id="gHam" x1="0" y1="0" x2="1" y2="0"><stop offset="0" stop-color="#e9cf8c"/><stop offset="1" stop-color="#c49a45"/></linearGradient></defs>
<!-- model tree tab icon -->
<g fill="#f4f4f4" stroke="#4a4a4a" stroke-width="1.300"><rect x="12.500" y="216.500" width="5" height="4.500"/><rect x="12.500" y="225" width="5" height="4.500"/><rect x="12.500" y="233.500" width="5" height="4.500"/><rect x="21.500" y="225" width="4.500" height="4.500"/><path d="M15 221v4M15 229.500v4M17.500 227.200h4" fill="none" stroke-width="1"/></g>
<!-- folders -->
<g stroke="#d9b86a" stroke-width="0.900"><path d="M126.500 220.500v-2.500h5l1.500 1.500h6.500v10h-13z" fill="url(#gFold)"/><path d="M130.500 225v-2.500h5l1.500 1.500h6.500v10h-13z" fill="url(#gFold)"/><path d="M134.500 229.500v-2.500h5l1.500 1.500h7v10.500h-13.500z" fill="url(#gFold)"/></g>
<g><path d="M200.500 223v-3.500h7l2 2h11.500v15h-20.500z" fill="url(#gFold)" stroke="#d9b86a" stroke-width="0.900"/><circle cx="211" cy="229.500" r="2.600" fill="#1a6e9c"/><path d="M211 225v9M206.500 229.500h9M207.800 226.300l6.400 6.400M214.200 226.300l-6.400 6.400" stroke="#1a6e9c" stroke-width="1.100"/></g>
<!-- hammer -->
<g><rect x="129" y="256" width="5" height="19.500" rx="1" fill="url(#gHam)" stroke="#b08a3a" stroke-width="0.600"/><path d="M124.500 258c0-5 8-6 12-5.500v5h-7c-2 0-3 0-5 0.500z" fill="#6f6f6f"/><rect x="141" y="252" width="1.600" height="12" fill="#555"/><rect x="140" y="264" width="3.600" height="11.500" rx="1" fill="url(#gHam)" stroke="#b08a3a" stroke-width="0.500"/></g>
<!-- list doc -->
<g><path d="M176.500 252.500h14l5 5v17.500h-19z" fill="#f3f7fa" stroke="#a9b4be"/><path d="M190.500 252.500v5h5" fill="#dde6ee" stroke="#a9b4be"/><path d="M183.500 260h9M183.500 264.500h9M183.500 269h9" stroke="#8f8f8f" stroke-width="1.300"/><circle cx="180.500" cy="260" r="1" fill="#7a9ab5"/><circle cx="180.500" cy="264.500" r="1" fill="#7a9ab5"/><circle cx="180.500" cy="269" r="1" fill="#7a9ab5"/><path d="M176.500 275.500h19" stroke="#8a949e" stroke-width="1.200"/></g>
<!-- tree hide -->
<g fill="none" stroke="#b9b9b9" stroke-width="1"><rect x="231.500" y="252.500" width="5" height="4.500"/><rect x="231.500" y="261.500" width="5" height="4.500"/><rect x="231.500" y="270" width="5" height="4.500"/><path d="M240 252v22M246 254v20M252 254v14"/></g>
<g><path d="M243 267c3-4 8-4 11 0.500c-3 4-8 4-11-0.500z" fill="#3a3a3a"/><circle cx="248.500" cy="267" r="1.500" fill="#eee"/><path d="M241.500 259.500l14.500 15" stroke="#222" stroke-width="1.300"/></g>
<!-- part icon -->
<g stroke-linejoin="round"><path d="M14.500 318.500l3.500-4h11l-3.500 4z" fill="#c9ecfa" stroke="#5db3d8" stroke-width="0.800"/><path d="M25.500 318.500l3.500-4v10.500l-3.500 3.500z" fill="#5db3d8"/><rect x="14.500" y="318.500" width="11" height="10" fill="#a9e0f6" stroke="#5db3d8" stroke-width="0.800"/></g>
<!-- plane icons -->
<g fill="none" stroke="#8a6a2a" stroke-width="1.700" stroke-linejoin="round"><path d="M38 351.500l4-10.500h12l-4 10.500z"/><path d="M38 376l4-10.500h12l-4 10.500z"/><path d="M38 400.500l4-10.500h12l-4 10.500z"/></g>
<!-- csys -->
<g stroke="#8a6a2a" stroke-width="1.500"><path d="M46 411v19M37.500 420.500h13M39 429l10-17M41 413l9 16"/></g>
<g fill="#222" font-family="Liberation Sans, sans-serif" font-weight="bold" font-size="7"><text x="36.500" y="416">y</text><text x="52" y="422.500">x</text><text x="36.500" y="430">z</text></g>
<!-- sketch -->
<g><path d="M38 438h17M38 454h17M42 446h10" stroke="#9ab" stroke-width="1.200" stroke-dasharray="1.500 2"/><path d="M38.500 450c1-9 14.500-9 15.500 0" fill="none" stroke="#2e8fc0" stroke-width="2.400"/></g>
<!-- insert arrow -->
<path d="M40.500 467.500h5v-4.500l7 7-7 7v-4.500h-5z" fill="#1f8a1f" stroke="#146414" stroke-width="0.700"/>
</svg>
<!--/LEFT-->
<!--VIEW-->
<!-- ===== VIEWPORT ===== -->
<div id="vpclip" style="position:absolute;left:269px;top:210px;width:1390px;height:1155px;overflow:hidden">
<svg id="drawing" style="left:-269px;top:-210px" width="2048" height="1365" viewBox="0 0 2048 1365">
<defs><filter id="soft" x="-2%" y="-2%" width="104%" height="104%"><feGaussianBlur stdDeviation="1"/></filter></defs>
<g id="sketchimg" filter="url(#soft)" stroke="#fafafa" stroke-width="2.600" fill="none" stroke-linecap="butt">
<g id="sideview"><rect x="269.0" y="285.0" width="98.7" height="3.0" fill="#b4b4b4" stroke="none"/>
<rect x="477.0" y="285.0" width="248.0" height="3.0" fill="#b4b4b4" stroke="none"/>
<path d="M725.500 286.500l-20-3.500v7z" fill="#d4d4d4" stroke-width="0"/>
<rect x="724.5" y="267.5" width="3.0" height="195.5" fill="#b0b0b0" stroke="none"/>
<path d="M641.400 473.700H725.300V615.300H641.400z" fill="none" stroke-width="5.2" stroke="#d0d0d0"/>
<path d="M727 589.500h9c4.500 0 4.500 7.500 0 7.500h-9" fill="none" stroke-width="2.2"/>
<path d="M269.500 434.400C300 455,360 484,412 496.600S560 516,638.700 517.500" fill="none" stroke-width="11" stroke="#a2a2a2"/>
<path d="M269.500 429.700C300 451,360 480,412 492.500S560 511.500,638.700 512.800" fill="none" stroke-width="3"/>
<path d="M269.500 440C300 460,360 489,412 501S520 517,560 520H627.500" fill="none" stroke-width="3.2"/>
<rect x="269.5" y="536.2" width="362.0" height="5.7" fill="#dedede" stroke="none"/>
<rect x="269.5" y="541.9" width="362.0" height="4.8" fill="#858585" stroke="none"/>
<rect x="269.5" y="546.7" width="362.0" height="4.0" fill="#dedede" stroke="none"/>
<rect x="269.5" y="550.7" width="362.0" height="2.3" fill="#9c9c9c" stroke="none"/>
<rect x="314.7" y="464.4" width="11.1" height="157.9" fill="#8a8a8a" stroke="none"/>
<path d="M314.7 462.4V624.3M325.8 464.4V621.3" fill="none" stroke-width="4.2" stroke="#f2f2f2"/>
<rect x="409.7" y="495.5" width="10.1" height="95.5" fill="#8a8a8a" stroke="none"/>
<path d="M409.7 493.5V593M419.8 495.5V590" fill="none" stroke-width="4.2" stroke="#f2f2f2"/>
<rect x="517.6" y="511.7" width="10.5" height="66.3" fill="#8a8a8a" stroke="none"/>
<path d="M517.6 509.7V580M528.1 511.7V577" fill="none" stroke-width="4.2" stroke="#f2f2f2"/>
<path d="M629.700 513.400V583" fill="none" stroke-width="4.2" stroke="#f2f2f2"/>
<path d="M269.500 644.200C290 631.500,305 623.500,317.300 617.400C350 603,380 594,412 586.300S480 573.500,516.600 569.500" fill="none" stroke-width="10" stroke="#a2a2a2"/>
<path d="M269.500 639.200C290 627,305 619,317.300 613C350 599,380 590,412 583.200S480 571,516.600 567" fill="none" stroke-width="3"/>
<path d="M269.500 649.200C290 636,305 628,317.300 621.800C350 607,380 598,412 589.400S480 576,516.600 572" fill="none" stroke-width="3"/>
<path d="M269.500 659C320 632,370 607,414.500 594.400S490 581,514 582C530 582.500,541 584,552 590C566 598,577 609,576.400 623C576 633,574 638,572 645L535.700 742" fill="none" stroke-width="2.3"/>
<path d="M528.100 568.500H618.700M526.400 582.200H630" fill="none" stroke-width="3.2"/>
<path d="M619.500 566v8.500h9" fill="none" stroke-width="2.6"/>
<path d="M540 565.400c25-1.500 55-1.500 88 0" fill="none" stroke-width="3" opacity="0.9"/>
<rect x="630.0" y="572.5" width="8.5" height="3.0" fill="#c8c8c8" stroke="none"/>
<path d="M620.400 584L565.300 742" fill="none" stroke-width="2.3"/>
<path d="M269.500 773H296.500V829H269.500" fill="none" stroke-width="3.4" stroke="#dedede"/>
<path d="M269.500 890.700C310 900,350 905,384 909.400M269.500 964.200C310 953,350 948,384 945.500" fill="none" stroke-width="2.4"/>
<path d="M383.300 908.500V946.500" fill="none" stroke-width="5" stroke="#bcbcbc"/>
<path d="M391.500 899.900H447.400V953.700H391.500z" fill="none" stroke-width="3.4" stroke="#e0e0e0"/>
<path d="M269.500 992.500H464.600V1153" fill="none" stroke-width="3.4" stroke="#e0e0e0"/>
<rect x="269.5" y="1151.3" width="374.2" height="7.2" fill="#d2d2d2" stroke="none"/>
<rect x="269.5" y="1170.8" width="374.2" height="4.0" fill="#d0d0d0" stroke="none"/>
<rect x="640.2" y="1153.0" width="4.5" height="21.8" fill="#d0d0d0" stroke="none"/>
<rect x="640.9" y="1179.0" width="3.0" height="65.0" fill="#b0b0b0" stroke="none"/>
<rect x="269.0" y="1225.1" width="52.0" height="3.0" fill="#b4b4b4" stroke="none"/>
<rect x="428.2" y="1225.1" width="213.0" height="3.0" fill="#b4b4b4" stroke="none"/>
<path d="M641.500 1226.600l-20-3.500v7z" fill="#d4d4d4" stroke-width="0"/>
<path d="M536.500 740C520 775,510 805,504 827C495 860,489 890,486.700 914.400C483 950,481 975,481.700 989C482 1020,483 1045,484.200 1059.700C486 1095,489 1130,491.700 1153" fill="none" stroke-width="2.3"/>
<path d="M549 747.500C530 790,517 830,510 860C503 890,500 905,499 914.400C496.500 945,496 975,496.700 989C498 1020,501 1045,504 1059.700C509 1095,516 1125,524 1153" fill="none" stroke-width="2.4"/>
<path d="M567.700 740C552 790,542 825,539 852C536 885,536 915,537.800 939.300C541 972,550 996,559 1014C572 1042,588 1068,601.300 1089.500C615 1112,630 1135,642.400 1153" fill="none" stroke-width="2.3"/>
<path d="M553 747.500C541 790,532 825,529 852C526 885,525 915,526.600 939.300C529 972,535 996,541.500 1014C551 1040,567 1070,584 1097C597 1117,610 1136,622.500 1153" fill="none" stroke-width="2.4"/>
<ellipse cx="517.900" cy="858.300" rx="5.500" ry="18.500" transform="rotate(8 517.900 858.300)" fill="none" stroke-width="2.600"/>
<ellipse cx="514" cy="940.500" rx="10.500" ry="35" transform="rotate(2 514 940.500)" fill="none" stroke-width="2.400"/>
<ellipse cx="531.600" cy="1058.400" rx="19.500" ry="55" transform="rotate(-14 531.600 1058.400)" fill="none" stroke-width="2.400"/>
<path d="M529 859.600H538M527 931.800H537.500" fill="none" stroke-width="3" opacity="0.9"/>
<rect x="492.0" y="829.9" width="12" height="7" rx="2.500" fill="#dcdcdc" stroke="none"/>
<rect x="472.0" y="932.1" width="14" height="7" rx="2.500" fill="#dcdcdc" stroke="none"/>
<rect x="470.3" y="1023.0" width="13" height="7" rx="2.500" fill="#dcdcdc" stroke="none"/>
<rect x="570.0" y="1026.5" width="12" height="7" rx="2.500" fill="#dcdcdc" stroke="none"/>
<rect x="464.5" y="1114.7" width="12" height="7" rx="2.500" fill="#dcdcdc" stroke="none"/>
<rect x="485.8" y="1002.6" width="4.400" height="4.400" fill="#dedede" stroke="none"/>
<rect x="549.3" y="1002.6" width="4.400" height="4.400" fill="#dedede" stroke="none"/>
<rect x="489.5" y="1073.6" width="4.400" height="4.400" fill="#dedede" stroke="none"/>
<rect x="582.8" y="1073.6" width="4.400" height="4.400" fill="#dedede" stroke="none"/>
<rect x="585.8" y="1059.8" width="4.400" height="4.400" fill="#dedede" stroke="none"/></g>
<g id="frontview"><path d="M935.5 329.0L1058.5 1166.0" stroke-width="5" stroke="#a6a6a6"/>
<path d="M1353.3 329.0L1230.3 1166.0" stroke-width="5" stroke="#a6a6a6"/>
<path d="M938.0 329.0L1060.0 1160.0" stroke-width="2" stroke="#f4f4f4"/>
<path d="M1350.8 329.0L1228.8 1160.0" stroke-width="2" stroke="#f4f4f4"/>
<path d="M944.5 345.0L1001.8 747.0" stroke-width="2.2"/>
<path d="M1344.3 345.0L1287.0 747.0" stroke-width="2.2"/>
<path d="M961.5 411.0L986.0 536.0" stroke-width="2" opacity="0.85"/>
<path d="M1327.3 411.0L1302.8 536.0" stroke-width="2" opacity="0.85"/>
<path d="M972.5 424.0L975.5 536.0" stroke-width="2.2"/>
<path d="M1316.3 424.0L1313.3 536.0" stroke-width="2.2"/>
<path d="M985.0 455.0L990.0 536.0" stroke-width="1.8" opacity="0.6"/>
<path d="M1303.8 455.0L1298.8 536.0" stroke-width="1.8" opacity="0.6"/>
<path d="M993.5 463.0L1000.0 536.0" stroke-width="2.2"/>
<path d="M1295.3 463.0L1288.8 536.0" stroke-width="2.2"/>
<path d="M975.5 551.0L993.0 640.0" stroke-width="2" opacity="0.9"/>
<path d="M1313.3 551.0L1295.8 640.0" stroke-width="2" opacity="0.9"/>
<path d="M983.7 551.0L1000.0 640.0" stroke-width="2" opacity="0.8"/>
<path d="M1305.1 551.0L1288.8 640.0" stroke-width="2" opacity="0.8"/>
<path d="M995.4 551.0L1007.0 640.0" stroke-width="2" opacity="0.9"/>
<path d="M1293.4 551.0L1281.8 640.0" stroke-width="2" opacity="0.9"/>
<path d="M944.0 344.0L961.0 398.0" stroke-width="3.2"/>
<path d="M1344.8 344.0L1327.8 398.0" stroke-width="3.2"/>
<path d="M973.0 424.0L993.5 459.0" stroke-width="3"/>
<path d="M1315.8 424.0L1295.3 459.0" stroke-width="3"/>
<path d="M1004.0 477.0L1022.0 492.0" stroke-width="3"/>
<path d="M1284.8 477.0L1266.8 492.0" stroke-width="3"/>
<path d="M1036.0 508.0L1056.0 520.0" stroke-width="2.6"/>
<path d="M1252.8 508.0L1232.8 520.0" stroke-width="2.6"/>
<path d="M1040.4 583.0L1055.0 570.0" stroke-width="2.6"/>
<path d="M1248.4 583.0L1233.8 570.0" stroke-width="2.6"/>
<path d="M1031.0 595.0L1020.0 611.0" stroke-width="3"/>
<path d="M1257.8 595.0L1268.8 611.0" stroke-width="3"/>
<path d="M1008.6 612.0L996.0 628.0" stroke-width="2.6"/>
<path d="M1280.2 612.0L1292.8 628.0" stroke-width="2.6"/>
<rect x="932.5" y="327.0" width="423.8" height="4.7" fill="#c2c2c2" stroke="none"/>
<rect x="942.7" y="340.3" width="403.4" height="5.1" fill="#cfcfcf" stroke="none"/>
<rect x="959.8" y="397.7" width="369.2" height="5.7" fill="#c4c4c4" stroke="none"/>
<rect x="961.0" y="405.6" width="366.8" height="5.7" fill="#c4c4c4" stroke="none"/>
<rect x="971.0" y="419.6" width="346.8" height="4.6" fill="#d4d4d4" stroke="none"/>
<rect x="992.7" y="458.9" width="303.4" height="6.0" fill="#dadada" stroke="none"/>
<rect x="1012.9" y="464.9" width="5.0" height="6.5" fill="#c8c8c8" stroke="none"/>
<rect x="1056.1" y="464.9" width="5.0" height="6.5" fill="#c8c8c8" stroke="none"/>
<rect x="1098.1" y="464.9" width="5.0" height="6.5" fill="#c8c8c8" stroke="none"/>
<rect x="1183.3" y="464.9" width="5.0" height="6.5" fill="#c8c8c8" stroke="none"/>
<rect x="1225.3" y="464.9" width="5.0" height="6.5" fill="#c8c8c8" stroke="none"/>
<rect x="1268.5" y="464.9" width="5.0" height="6.5" fill="#c8c8c8" stroke="none"/>
<rect x="1002.0" y="471.4" width="284.8" height="5.6" fill="#cbcbcb" stroke="none"/>
<rect x="1021.3" y="491.0" width="74.5" height="6.0" fill="#d2d2d2" stroke="none"/>
<rect x="1193.0" y="491.0" width="74.5" height="6.0" fill="#d2d2d2" stroke="none"/>
<rect x="1033.0" y="502.4" width="52.8" height="5.6" fill="#cfcfcf" stroke="none"/>
<rect x="1203.0" y="502.4" width="52.8" height="5.6" fill="#cfcfcf" stroke="none"/>
<rect x="1064.0" y="515.5" width="14.5" height="3.5" fill="#d0d0d0" stroke="none"/>
<rect x="1210.3" y="515.5" width="14.5" height="3.5" fill="#d0d0d0" stroke="none"/>
<path d="M1005.5 474.0L1005.5 612.0" stroke-width="3.6"/>
<path d="M1283.3 474.0L1283.3 612.0" stroke-width="3.6"/>
<path d="M1023.3 494.0L1023.3 596.0" stroke-width="3.2"/>
<path d="M1265.5 494.0L1265.5 596.0" stroke-width="3.2"/>
<path d="M1034.5 504.5L1034.5 583.7" stroke-width="2.6"/>
<path d="M1254.3 504.5L1254.3 583.7" stroke-width="2.6"/>
<path d="M1038.5 508.0L1038.5 580.0" stroke-width="2.2"/>
<path d="M1250.3 508.0L1250.3 580.0" stroke-width="2.2"/>
<path d="M1057.5 512.0L1057.5 578.0" stroke-width="2.6"/>
<path d="M1231.3 512.0L1231.3 578.0" stroke-width="2.6"/>
<path d="M1065.5 517.0L1065.5 572.0" stroke-width="2.6"/>
<path d="M1223.3 517.0L1223.3 572.0" stroke-width="2.6"/>
<path d="M1074.5 519.0L1074.5 566.0" stroke-width="2.6"/>
<path d="M1214.3 519.0L1214.3 566.0" stroke-width="2.6"/>
<rect x="966.0" y="536.3" width="107.7" height="4.7" fill="#dedede" stroke="none"/>
<rect x="1215.1" y="536.3" width="107.7" height="4.7" fill="#dedede" stroke="none"/>
<rect x="968.0" y="541.0" width="104.0" height="5.8" fill="#929292" stroke="none"/>
<rect x="1216.8" y="541.0" width="104.0" height="5.8" fill="#929292" stroke="none"/>
<rect x="966.0" y="546.8" width="107.7" height="4.0" fill="#dedede" stroke="none"/>
<rect x="1215.1" y="546.8" width="107.7" height="4.0" fill="#dedede" stroke="none"/>
<rect x="1037.8" y="577.0" width="48.0" height="6.7" fill="#cfcfcf" stroke="none"/>
<rect x="1203.0" y="577.0" width="48.0" height="6.7" fill="#cfcfcf" stroke="none"/>
<rect x="1031.0" y="593.0" width="67.7" height="4.5" fill="#cfcfcf" stroke="none"/>
<rect x="1190.1" y="593.0" width="67.7" height="4.5" fill="#cfcfcf" stroke="none"/>
<rect x="1008.6" y="609.7" width="271.6" height="6.8" fill="#d4d4d4" stroke="none"/>
<rect x="1008.6" y="621.0" width="271.6" height="6.5" fill="#d0d0d0" stroke="none"/>
<rect x="1035.5" y="616.5" width="5.0" height="4.5" fill="#c8c8c8" stroke="none"/>
<rect x="1077.5" y="616.5" width="5.0" height="4.5" fill="#c8c8c8" stroke="none"/>
<rect x="1206.3" y="616.5" width="5.0" height="4.5" fill="#c8c8c8" stroke="none"/>
<rect x="1248.3" y="616.5" width="5.0" height="4.5" fill="#c8c8c8" stroke="none"/>
<rect x="1001.8" y="665.5" width="285.2" height="5.5" fill="#d0d0d0" stroke="none"/>
<rect x="996.0" y="676.2" width="296.8" height="6.4" fill="#bdbdbd" stroke="none"/>
<rect x="997.0" y="685.4" width="294.8" height="5.4" fill="#bdbdbd" stroke="none"/>
<rect x="1001.8" y="744.3" width="285.2" height="4.7" fill="#dcdcdc" stroke="none"/>
<rect x="1013.4" y="751" width="4" height="4" fill="#d8d8d8" stroke="none"/>
<rect x="1049.8" y="751" width="4" height="4" fill="#d8d8d8" stroke="none"/>
<rect x="1086.0" y="751" width="4" height="4" fill="#d8d8d8" stroke="none"/>
<rect x="1121.3" y="751" width="4" height="4" fill="#d8d8d8" stroke="none"/>
<rect x="1161.0" y="751" width="4" height="4" fill="#d8d8d8" stroke="none"/>
<rect x="1197.4" y="751" width="4" height="4" fill="#d8d8d8" stroke="none"/>
<rect x="1232.6" y="751" width="4" height="4" fill="#d8d8d8" stroke="none"/>
<rect x="1269.0" y="751" width="4" height="4" fill="#d8d8d8" stroke="none"/>
<path d="M1001.8 748.0L1001.8 761.0" stroke-width="4.5"/>
<path d="M1287.0 748.0L1287.0 761.0" stroke-width="4.5"/>
<path d="M1139.7 331.0L1139.7 473.0" stroke-width="4.2" stroke="#e6e6e6"/>
<path d="M1149.1 331.0L1149.1 473.0" stroke-width="4.2" stroke="#e6e6e6"/>
<path d="M1139.7 615.0L1139.7 757.0" stroke-width="4.2" stroke="#e6e6e6"/>
<path d="M1149.1 615.0L1149.1 757.0" stroke-width="4.2" stroke="#e6e6e6"/>
<circle cx="1144.4" cy="543" r="70.500" fill="none" stroke-width="2" stroke="#ececec"/>
<rect x="1128" y="590" width="6" height="6" fill="#e0e0e0" stroke="none"/><rect x="1152.500" y="591" width="4" height="4" fill="#e0e0e0" stroke="none"/>
<path d="M1121.0 615.0L1062.5 1150.0" stroke-width="2.4" stroke="#ececec"/>
<path d="M1167.8 615.0L1226.3 1150.0" stroke-width="2.4" stroke="#ececec"/>
<path d="M1131.0 615.0L1068.5 1150.0" stroke-width="2.4" stroke="#ececec"/>
<path d="M1157.8 615.0L1220.3 1150.0" stroke-width="2.4" stroke="#ececec"/>
<rect x="1113.0" y="791.5" width="62.8" height="4.5" fill="#d2d2d2" stroke="none"/>
<rect x="1099.5" y="902.4" width="89.8" height="6.8" fill="#cfcfcf" stroke="none"/>
<rect x="1085.8" y="1008.0" width="117.2" height="6.5" fill="#cfcfcf" stroke="none"/>
<rect x="1074.5" y="1112.5" width="139.8" height="3.0" fill="#c4c4c4" stroke="none"/>
<rect x="1065.4" y="1151.0" width="158.0" height="5.5" fill="#ececec" stroke="none"/>
<rect x="1058.0" y="1159.5" width="172.8" height="2.5" fill="#b8b8b8" stroke="none"/>
<path d="M1097.4 1007.4A94 94 0 0 1 1094.6 846.3" fill="none" opacity="0.8" stroke-width="2.6"/>
<path d="M1191.4 1007.4A94 94 0 0 0 1194.2 846.3" fill="none" opacity="0.8" stroke-width="2.6"/>
<path d="M1093.9 990.6A82 82 0 0 1 1093.9 861.4" fill="none" opacity="0.8" stroke-width="2.2"/>
<path d="M1194.9 990.6A82 82 0 0 0 1194.9 861.4" fill="none" opacity="0.8" stroke-width="2.2"/>
<path d="M1091.1 981.2A76.7 76.7 0 0 1 1093.1 869.0" fill="none" opacity="0.8" stroke-width="2"/>
<path d="M1197.7 981.2A76.7 76.7 0 0 0 1195.7 869.0" fill="none" opacity="0.8" stroke-width="2"/>
<rect x="1049.0" y="924.0" width="4" height="4" fill="#dedede" stroke="none"/>
<rect x="1235.8" y="924.0" width="4" height="4" fill="#dedede" stroke="none"/>
<rect x="1085.0" y="928.0" width="4" height="4" fill="#dedede" stroke="none"/>
<rect x="1199.8" y="928.0" width="4" height="4" fill="#dedede" stroke="none"/>
<rect x="1076.0" y="856.0" width="4" height="4" fill="#dedede" stroke="none"/>
<rect x="1208.8" y="856.0" width="4" height="4" fill="#dedede" stroke="none"/>
<rect x="1092.0" y="859.0" width="4" height="4" fill="#dedede" stroke="none"/>
<rect x="1192.8" y="859.0" width="4" height="4" fill="#dedede" stroke="none"/>
<path d="M1097.7 835.5A36 36 0 0 1 1099.0 764.4" fill="none" opacity="0.85" stroke-width="2.4"/>
<path d="M1095.9 819.9A21.5 21.5 0 0 1 1096.6 779.8" fill="none" opacity="0.85" stroke-width="2.4"/>
<path d="M1094.1 830.4A32 32 0 0 1 1095.7 769.1" fill="none" opacity="0.7" stroke-width="2"/>
<path d="M1093.6 781.1A26 26 0 0 1 1131.0 767.5" fill="none" stroke-width="3"/>
<path d="M1100.8 784.0A19 19 0 0 1 1126.0 774.8" fill="none" stroke-width="2.6"/>
<ellipse cx="1197" cy="801" rx="8.500" ry="27" fill="none" stroke-width="3"/><ellipse cx="1196.500" cy="801" rx="3.500" ry="9" fill="none" stroke-width="2.200"/><circle cx="1196.500" cy="801" r="2" fill="#d8d8d8" stroke="none"/>
<path d="M1152 775l6-3 4 4 6-4 3 4M1150 792l6-8 5 7 7-9 5 3M1188 774l10-3 7 3M1190 826l8 2 8-3" fill="none" stroke-width="3"/>
<path d="M1073.5 1145.4A90 90 0 0 1 1068.1 1042.3" fill="none" opacity="0.8" stroke-width="2.2"/>
<path d="M1215.3 1145.4A90 90 0 0 0 1220.7 1042.3" fill="none" opacity="0.8" stroke-width="2.2"/>
<path d="M1075.6 1134.7A82 82 0 0 1 1072.0 1051.5" fill="none" opacity="0.8" stroke-width="2.2"/>
<path d="M1213.2 1134.7A82 82 0 0 0 1216.8 1051.5" fill="none" opacity="0.8" stroke-width="2.2"/>
<rect x="1125" y="925.500" width="38" height="39.500" fill="none" stroke-width="2" opacity="0.850"/>
<path d="M1131 959v-20c0-6 7-6 7 0v14c0 5 6 5 6 0v-14c0-6 7-6 7 0v20" fill="none" stroke-width="2" opacity="0.850"/>
<rect x="1112" y="970" width="61" height="5.500" fill="#d0d0d0" stroke="none"/><rect x="1124.500" y="983.500" width="38.500" height="4.500" fill="#c4c4c4" stroke="none"/>
<g fill="#ececec" stroke="none"><rect x="1108" y="1023" width="23.500" height="5.500" rx="2"/><rect x="1108" y="1025" width="8.500" height="10.500" rx="3"/><rect x="1130.5" y="1028" width="6" height="6.500" rx="2"/><rect x="1150.7" y="1023" width="23.500" height="5.500" rx="2"/><rect x="1150.7" y="1025" width="8.500" height="10.500" rx="3"/><rect x="1173.2" y="1028" width="6" height="6.500" rx="2"/><rect x="1114.6" y="1040.500" width="12" height="15.500" rx="4.500"/><rect x="1119.1" y="1070" width="3" height="9" fill="#d0d0d0"/><rect x="1138.8" y="1040.500" width="12" height="15.500" rx="4.500"/><rect x="1143.3" y="1070" width="3" height="9" fill="#d0d0d0"/><rect x="1160.4" y="1040.500" width="12" height="15.500" rx="4.500"/><rect x="1164.9" y="1070" width="3" height="9" fill="#d0d0d0"/><rect x="1108" y="1080" width="30.800" height="11.500" rx="4.500" fill="#e2e2e2"/><rect x="1147" y="1080" width="31" height="11.500" rx="4.500" fill="#e2e2e2"/><rect x="1129.600" y="1115" width="8.800" height="7.600" rx="2"/><rect x="1150.700" y="1115" width="7" height="7" rx="2"/></g><g stroke="#e0e0e0" stroke-width="3" fill="none"><circle cx="1120.6" cy="1064" r="4"/><circle cx="1144.3" cy="1064" r="4"/><circle cx="1166.4" cy="1064" r="4"/><rect x="1126" y="1096.200" width="36" height="14.500" rx="2" stroke-width="2.600"/><rect x="1134" y="1101.500" width="19" height="4.500" rx="1.500" stroke-width="2.400" fill="#d8d8d8"/></g>
<rect x="1355.0" y="328.3" width="90.0" height="3.0" fill="#b4b4b4" stroke="none"/>
<rect x="1234.0" y="1171.0" width="211.0" height="3.0" fill="#b4b4b4" stroke="none"/>
<path d="M1427.3 333.0L1427.3 712.0" stroke-width="2" stroke="#d0d0d0"/>
<path d="M1427.3 777.0L1427.3 1170.0" stroke-width="2" stroke="#d0d0d0"/>
<path d="M1427.300 331l-3 17h6zM1427.300 1171l-3-17h6z" fill="#d0d0d0" stroke="none"/></g>
<text x="396.4" y="282" font-size="25" textLength="53.9" lengthAdjust="spacingAndGlyphs" font-family="Liberation Sans, sans-serif" fill="#d2d2d2" stroke="none">62.5"</text>
<text x="371.3" y="311.3" font-size="25" textLength="104.1" lengthAdjust="spacingAndGlyphs" font-family="Liberation Sans, sans-serif" fill="#d2d2d2" stroke="none">158.8 CM</text>
<text x="348.5" y="1221.6" font-size="25" textLength="53.5" lengthAdjust="spacingAndGlyphs" font-family="Liberation Sans, sans-serif" fill="#d2d2d2" stroke="none">53.5"</text>
<text x="323.5" y="1251.5" font-size="25" textLength="104.7" lengthAdjust="spacingAndGlyphs" font-family="Liberation Sans, sans-serif" fill="#d2d2d2" stroke="none">135.9 CM</text>
<text x="1394.8" y="741" font-size="25" textLength="64.7" lengthAdjust="spacingAndGlyphs" font-family="Liberation Sans, sans-serif" fill="#d2d2d2" stroke="none">92.75"</text>
<text x="1376" y="770.3" font-size="25" textLength="104.4" lengthAdjust="spacingAndGlyphs" font-family="Liberation Sans, sans-serif" fill="#d2d2d2" stroke="none">235.6 CM</text>
</g>
<g id="datums" stroke="#a0683a" stroke-width="1" fill="none" opacity="0.900">
<path d="M1054.700 1178.800V320.900H1233V1178.800H1054.700M1060.800 320.900V1174M1054.700 1172H1233"/>
<path d="M1059 1127.500l-3 16h6z" fill="#a0683a" stroke="none"/><path d="M1101.700 1174.800l-13-3v6z" fill="#a0683a" stroke="none"/>
</g>
<text x="1055.6" y="320.2" font-size="19.5" textLength="68.9" lengthAdjust="spacingAndGlyphs" font-family="Liberation Sans, sans-serif" fill="#a0683a" stroke="none">FRONT</text>
<text x="1062" y="1176" font-size="18" textLength="55.6" lengthAdjust="spacingAndGlyphs" font-family="Liberation Sans, sans-serif" fill="#a0683a" stroke="none" opacity="0.500">RIGHT</text>
<text x="1237" y="1174.2" font-size="19" textLength="37.4" lengthAdjust="spacingAndGlyphs" font-family="Liberation Sans, sans-serif" fill="#a0683a" stroke="none">TOP</text>
<text x="1063" y="1193.5" font-size="19.5" textLength="161.4" lengthAdjust="spacingAndGlyphs" font-family="Liberation Sans, sans-serif" fill="#a0683a" stroke="none">PRT_CSYS_DEF</text>
<g stroke="#dc2b2b" stroke-width="1.800" fill="none"><path d="M1144.400 327V1174.200M1106.300 1174.200H1227.800"/></g>
<path d="M1142.200 980V1172" stroke="#5fb0b8" stroke-width="0.800" opacity="0.700"/>
<path d="M1143.800 750.600V716.500" stroke="#3fd24a" stroke-width="1.800"/><path d="M1141.500 718.500l2.300-4 2.300 4z" fill="#3fd24a"/>
<path d="M1144 750.600H1177.800" stroke="#e02525" stroke-width="1.500"/><circle cx="1177.800" cy="750.600" r="2" fill="#e02525"/>
<circle cx="1143.800" cy="750.600" r="2.600" fill="#35d8e8"/>
<text x="1062.500" y="1122" font-size="20.500" font-family="Liberation Sans, sans-serif" fill="#1c1c1c">Y</text><text x="1062.500" y="1171" font-size="20.500" font-family="Liberation Sans, sans-serif" fill="#1c1c1c">Z</text><text x="1110.500" y="1171" font-size="20.500" font-family="Liberation Sans, sans-serif" fill="#1c1c1c">X</text>
</svg>
</div>
<div class="abs" id="gtb">
<div style="left:984px;top:216px;width:349px;height:37px;background:#fafafa;border:1px solid #ececec"></div>
<div style="left:1269.500px;top:219px;width:27.500px;height:29.500px;background:#dcdfe2;border:1px solid #b9bcbf"></div>
<div style="left:1299.500px;top:219px;width:27.500px;height:29.500px;background:#dcdfe2;border:1px solid #b9bcbf"></div>
</div>
<svg id="gtbicons" style="left:984px;top:216px" width="349" height="37" viewBox="984 216 349 37">
<defs><linearGradient id="gRp" x1="0" y1="0" x2="1" y2="1"><stop offset="0" stop-color="#fff"/><stop offset="0.45" stop-color="#eef6fa"/><stop offset="0.55" stop-color="#5fa8c6"/><stop offset="1" stop-color="#2f86ad"/></linearGradient><radialGradient id="gSp" cx="0.35" cy="0.3" r="0.9"><stop offset="0" stop-color="#fff"/><stop offset="0.5" stop-color="#d9d9d9"/><stop offset="1" stop-color="#777"/></radialGradient><radialGradient id="gL2" cx="0.4" cy="0.35" r="0.8"><stop offset="0" stop-color="#fff"/><stop offset="1" stop-color="#cfeaf7"/></radialGradient></defs>
<!-- refit -->
<rect x="993.500" y="225.500" width="15" height="15" fill="#f2f2f2" stroke="#9aa0a6"/><path d="M1005 237l5 5.500" stroke="#8a8a8a" stroke-width="3" stroke-linecap="round"/><circle cx="1001" cy="233" r="5.200" fill="url(#gL2)" stroke="#6fb6d6" stroke-width="1.400"/>
<!-- zoom in -->
<path d="M1036 237.500l5.500 5.500" stroke="#8a8a8a" stroke-width="3.200" stroke-linecap="round"/><circle cx="1031.500" cy="232" r="6.500" fill="url(#gL2)" stroke="#4aa3cc" stroke-width="1.500"/><path d="M1027.500 232h8M1031.500 228v8" stroke="#0f5c8a" stroke-width="2.400"/>
<!-- zoom out -->
<path d="M1067 237.500l5.500 5.500" stroke="#8a8a8a" stroke-width="3.200" stroke-linecap="round"/><circle cx="1062.500" cy="232" r="6.500" fill="url(#gL2)" stroke="#4aa3cc" stroke-width="1.500"/><path d="M1058.500 232h8" stroke="#0f5c8a" stroke-width="2.400"/>
<!-- repaint -->
<rect x="1086.500" y="225.500" width="18" height="17.500" fill="url(#gRp)" stroke="#9a9a9a"/><rect x="1086" y="224.500" width="19" height="2.500" fill="#b5b5b5"/><path d="M1089 241.500c5-3 9-7 14-14.500" stroke="#fff" stroke-width="2.600" fill="none"/><path d="M1090.500 242.500c5-3 9-7 13.500-13.500" stroke="#1f6b96" stroke-width="1.200" fill="none"/>
<!-- rendering -->
<circle cx="1129.500" cy="231" r="6.500" fill="url(#gSp)"/><circle cx="1123" cy="237.500" r="6.500" fill="url(#gSp)"/><path d="M1133.500 245h3.500v-3.500z" fill="#444"/>
<!-- display style cube -->
<path d="M1150.500 229l4-4h12l-4 4z" fill="#aee4f7"/><path d="M1162.500 229l4-4v14l-4 4z" fill="#5aa6c9"/><rect x="1150.500" y="229" width="12" height="14" fill="#fff" stroke="#8fd0ea"/><path d="M1166 245h3v-3z" fill="#444"/>
<!-- saved orientations -->
<path d="M1181 228l3.500-3.500h12l-3.500 3.500z" fill="#aee4f7"/><path d="M1193 228l3.500-3.500v12l-3.500 3.500z" fill="#5aa6c9"/><rect x="1181" y="228" width="12" height="12" fill="#fff" stroke="#8fd0ea"/><rect x="1190.500" y="234.500" width="7" height="8" fill="#f0f0f0" stroke="#999" stroke-width="0.800"/><path d="M1198 245h3v-3z" fill="#444"/>
<!-- view manager -->
<rect x="1210.500" y="224.500" width="16" height="16" fill="#fcfcfc" stroke="#aaa" stroke-width="0.900"/><path d="M1210.500 228.500h16M1210.500 232.500h16M1210.500 236.500h16M1215.500 228.500v12" stroke="#bdbdbd" stroke-width="0.900"/><path d="M1216.500 236h3l1.200-2.500h5l1.200 2.500h3.600v8.500h-14z" fill="#2e2e2e"/><circle cx="1224" cy="240.300" r="2.800" fill="#8a8a8a" stroke="#e2e2e2" stroke-width="0.900"/>
<!-- datum display filters -->
<path d="M1244 226l4 4M1248 226l-4 4M1252 224.500l-3 5M1257 228l-11 14M1252 236l6 6M1258 236l-6 6" stroke="#8a6a2a" stroke-width="1.400" fill="none"/><path d="M1260 245h3v-3z" fill="#444"/>
<!-- annotation display -->
<rect x="1274.500" y="225.500" width="9" height="5" fill="#fbf3cf" stroke="#9a8a5a" stroke-width="0.900"/><path d="M1286 225.500h6l-4.500 5.500h4.500" stroke="#333" stroke-width="1.200" fill="none"/><ellipse cx="1287" cy="240" rx="5.200" ry="3" fill="#222"/><circle cx="1287" cy="240" r="1.200" fill="#dcdfe2"/>
<!-- spin center -->
<path d="M1307 228.500l6.500 6 8-3M1313.500 234.500l-5.500 7" stroke="#555" stroke-width="1.300" fill="none"/><circle cx="1307" cy="228" r="2.500" fill="#3e9a3e"/><circle cx="1321.500" cy="231.500" r="2.700" fill="#e05050"/><circle cx="1307.500" cy="242" r="2.500" fill="#3a8fd0"/>
</svg>
<!--/VIEW-->
</div>
</body>
</html>
